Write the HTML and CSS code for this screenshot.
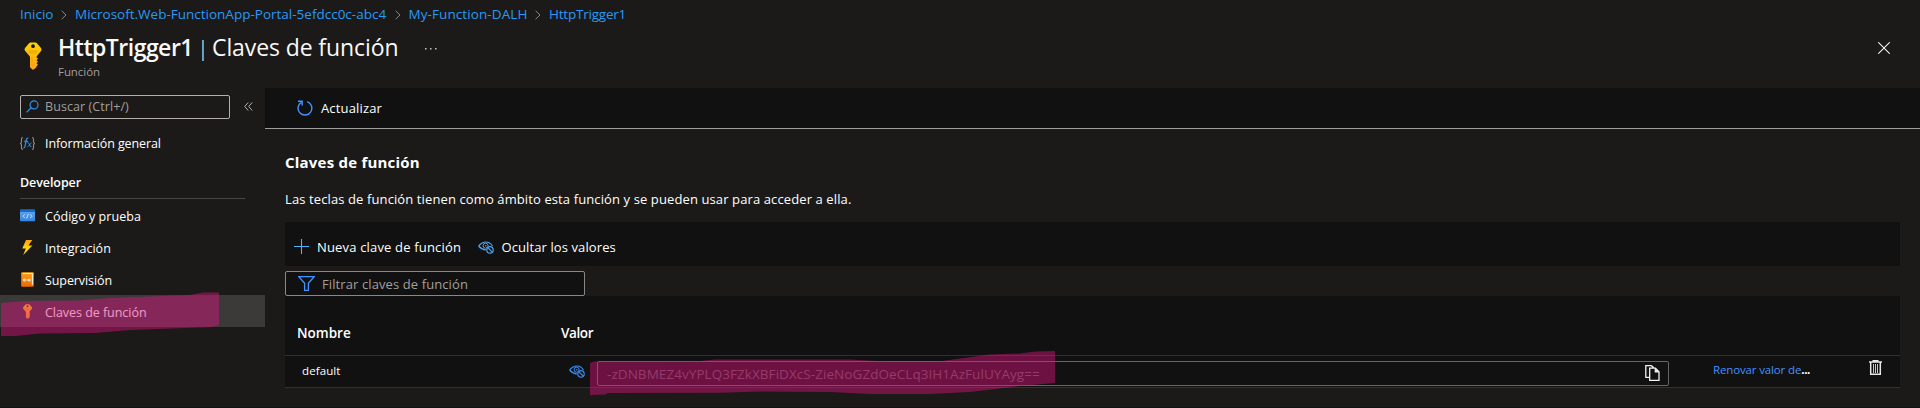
FILE: index.html
```html
<!DOCTYPE html>
<html lang="es">
<head>
<meta charset="utf-8">
<title>HttpTrigger1 | Claves de función</title>
<link rel="stylesheet" href="styles.css">
</head>
<body>
<svg width="0" height="0" class="defs" aria-hidden="true">
  <defs>
    <linearGradient id="gold" x1="0" y1="0" x2="0" y2="1"><stop offset="0" stop-color="#ffd400"/><stop offset="1" stop-color="#fea11b"/></linearGradient>
    <linearGradient id="bolt" x1="0" y1="0" x2="0" y2="1"><stop offset="0" stop-color="#fea11b"/><stop offset=".5" stop-color="#ffd400"/><stop offset="1" stop-color="#ffe452"/></linearGradient>
    <linearGradient id="orange" x1="0" y1="0" x2="0" y2="1"><stop offset="0" stop-color="#ffa01a"/><stop offset="1" stop-color="#ea6a00"/></linearGradient>
    <linearGradient id="blue" x1="0" y1="0" x2="0" y2="1"><stop offset="0" stop-color="#5ea0ef"/><stop offset="1" stop-color="#3285e0"/></linearGradient>
    <symbol id="key" viewBox="0 0 18 28">
      <path fill="url(#gold)" fill-rule="evenodd" d="M6.6.6h4.8q.8 0 1.300.5l4.300 5q.900 1.100.200 2.600l-4 5.100q-.7.700-.7 1.500l1.500 1.500-1.500 1.500 1.500 1.500-1.500 1.500 1.500 1.500-1.500 1.500v.9L9.600 27.400q-.6.600-1.200 0L6 25.200V15.300q0-.8-.7-1.500L1 8.700Q0 7.300 1 6.100l4.300-5q.5-.5 1.300-.5ZM9 2.300a1.900 1.900 0 1 0 0 3.800 1.900 1.900 0 0 0 0-3.800Z"/>
      <path fill="#f0a010" d="M4.500 8.600h9v1.100h-9zM4.500 10.400h9v1.100h-9zM7.500 15.500h1v9.500l-1-1z"/>
    </symbol>
    <symbol id="eye" viewBox="0 0 16 13">
      <path fill="none" stroke="currentColor" stroke-width="1.200" d="M.6 5Q4 1 8 1t6.500 4M.6 5Q3.500 8.500 7.800 8.800"/>
      <circle cx="7.600" cy="4.700" r="2.500" fill="none" stroke="currentColor"/>
      <circle cx="7.800" cy="4.700" r=".8" fill="currentColor"/>
      <circle cx="12" cy="8.900" r="3.200" fill="#111" stroke="currentColor" stroke-width="1.200"/>
      <path stroke="currentColor" stroke-width="1.200" d="m9.800 6.700 4.400 4.400"/>
    </symbol>
    <symbol id="sep" viewBox="0 0 6 10"><path fill="none" stroke="#8a8886" d="m.6.800 4.400 4.200L.6 9.200"/></symbol>
  </defs>
</svg>

<div class="page">
  <nav class="crumbs">
    <a class="c1">Inicio</a><svg class="sep"><use href="#sep"/></svg>
    <a class="c2">Microsoft.Web-FunctionApp-Portal-5efdcc0c-abc4</a><svg class="sep"><use href="#sep"/></svg>
    <a class="c3">My-Function-DALH</a><svg class="sep"><use href="#sep"/></svg>
    <a class="c4">HttpTrigger1</a>
  </nav>

  <header class="head">
    <svg class="head-key"><use href="#key"/></svg>
    <div class="head-text">
      <h1><b>HttpTrigger1</b><i>|</i><span>Claves de función</span><svg class="more" viewBox="0 0 12 2"><path fill="#c8c6c4" d="M0 0h1.500v1.500H0zM5 0h1.500v1.500H5zM10 0h1.500v1.500H10z"/></svg></h1>
      <p>Función</p>
    </div>
    <svg class="close" viewBox="0 0 12 12"><path stroke="#f3f2f1" stroke-width="1.100" d="m.3.300 11.400 11.400M11.700.3.300 11.700"/></svg>
  </header>

  <div class="body">
    <aside class="side">
      <div class="search-row">
        <div class="search">
          <svg class="i12" viewBox="0 0 13 13"><circle cx="8" cy="4.900" r="4" fill="none" stroke="#2f8ee0" stroke-width="1.200"/><path stroke="#2f8ee0" stroke-width="1.300" d="M5.200 7.700.5 12.400"/></svg>
          <span>Buscar (Ctrl+/)</span>
        </div>
        <svg class="collapse" viewBox="0 0 9 9"><path fill="none" stroke="#b3b0ad" d="M4.200.5.700 4.500l3.500 4M8.200.5 4.700 4.500l3.500 4"/></svg>
      </div>
      <div class="item overview">
        <svg class="i15" viewBox="0 0 15 15"><path fill="none" stroke="#8a8886" stroke-width="1.200" d="M3 1.500q-1.500 0-1.500 1.500v2.500q0 1.500-1 2 1 .5 1 2V12q0 1.500 1.500 1.500M12 1.500q1.500 0 1.500 1.500v2.500q0 1.500 1 2-1 .5-1 2V12q0 1.500-1.500 1.500"/><path fill="none" stroke="#2f8ee0" stroke-width="1.300" d="M8.300 2.200Q6.600 1.800 6.200 4L5 10.500q-.3 1.500-1.500 1.200M4.300 5.500H8"/><path fill="none" stroke="#2f8ee0" d="M7.700 6.800q1.200-.3 1.500 1l.8 2.200q.4 1 1.500.6M11.700 6.800 7.500 10.900"/></svg>
        <span class="t1">Información general</span>
      </div>
      <h2>Developer</h2>
      <div class="item">
        <svg class="i15" viewBox="0 0 15 15"><path fill="url(#blue)" d="M0 3.500h15v9q0 .7-.7.700H.7q-.7 0-.7-.7z"/><path fill="#0f6cc9" d="M.7 1.200h13.600q.7 0 .7.700v2H0v-2q0-.7.700-.7z"/><path fill="none" stroke="#d8eaff" stroke-width=".9" d="M4.800 6.300 3 8.200l1.800 1.900M10.200 6.300 12 8.200l-1.800 1.900M8.400 5.800l-1.800 4.700"/></svg>
        <span class="t2">Código y prueba</span>
      </div>
      <div class="item">
        <svg class="i15" viewBox="0 0 15 15"><path fill="url(#bolt)" d="M6 0h6.300L8.400 5.500h4L3.200 15l2.700-6.500H2.300z"/></svg>
        <span class="t3">Integración</span>
      </div>
      <div class="item">
        <svg class="i15" viewBox="0 0 15 15"><rect x="1.200" y=".2" width="12.600" height="14.600" rx="1" fill="url(#orange)"/><path fill="#fff" d="M3 1.200h9.800v11.600h-.9V2.100H3z"/><circle cx="4.300" cy="8" r="1" fill="none" stroke="#fff"/><circle cx="9.300" cy="8" r="1" fill="none" stroke="#fff"/><path stroke="#fff" stroke-width=".7" d="M5.500 8h2.600"/></svg>
        <span class="t4">Supervisión</span>
      </div>
      <div class="item active">
        <svg class="i15"><use href="#key"/></svg>
        <span class="t5">Claves de función</span>
      </div>
    </aside>

    <main class="main">
      <div class="toolbar">
        <svg class="refresh" viewBox="0 0 16 16"><path fill="none" stroke="#4292ff" stroke-width="1.400" d="M10.200 1.600A6.900 6.900 0 1 1 4.200 2.300M.9 1.300h4.300v4.300"/></svg>
        <span>Actualizar</span>
      </div>
      <section class="content">
        <h3>Claves de función</h3>
        <p class="intro">Las teclas de función tienen como ámbito esta función y se pueden usar para acceder a ella.</p>
        <div class="commands">
          <svg class="plus" viewBox="0 0 15 15"><path stroke="#56b0f5" stroke-width="1.100" d="M7.500 0v15M0 7.500h15"/></svg>
          <span class="new">Nueva clave de función</span>
          <svg class="eye light"><use href="#eye"/></svg>
          <span class="hide">Ocultar los valores</span>
        </div>
        <div class="filter">
          <svg class="funnel" viewBox="0 0 17 15"><path fill="none" stroke="#4292ff" stroke-width="1.300" d="M.9.700h15.200l-5.700 6.600v7H6.600v-7z"/></svg>
          <span>Filtrar claves de función</span>
        </div>
        <div class="table">
          <div class="row thead"><b class="name">Nombre</b><b class="valor">Valor</b></div>
          <div class="row">
            <span class="default">default</span>
            <svg class="eye"><use href="#eye"/></svg>
            <div class="field">
              <span>-zDNBMEZ4vYPLQ3FZkXBFiDXcS-ZieNoGZdOeCLq3IH1AzFulUYAyg==</span>
              <svg class="copy" viewBox="0 0 15 16"><path fill="none" stroke="#f3f2f1" stroke-width="1.300" d="M4 12.300H.8V.7h5.500l2.500 2.100M4.700 3.200h5.700l3.600 3.600v8.500H4.700z"/><path fill="#f3f2f1" d="M9.700 3v4.500h4.500z"/></svg>
            </div>
            <a class="renew">Renovar valor de<b>...</b></a>
            <svg class="trash" viewBox="0 0 13 15"><path fill="none" stroke="#e6e6e6" stroke-width="1.500" d="M0 2.100h13M4.200 2V.8h4.600V2M1.700 2.500v11.700h9.600V2.500"/><path stroke="#c8c8c8" d="M4.500 4v9M6.500 4v9M8.500 4v9"/></svg>
          </div>
        </div>
      </section>
    </main>
  </div>

  <svg class="marker" viewBox="0 0 1920 408">
    <path d="M1 303 25 301 80 300.500 110 298 190 295 203 292.500H218L219 293V325L212 327 130 330 95 333 40 333.500 15 336H1Z"/>
    <path d="M590 363 594 361.500 700 361 715 359.500H850L895 362H935L960 358.500 990 354.500 1020 353.500 1035 351.500 1055 351V383L1020 386 970 392 930 394H870L830 392 760 391.500 720 392.700 608 393 605 394.500 590 395Z"/>
  </svg>
</div>
</body>
</html>
```
FILE: styles.css
```css
* { box-sizing: border-box; margin: 0; padding: 0; }
body { background: #1b1a19; color: #fff; font: 12.5px/32px "Open Sans", "Noto Sans", sans-serif; overflow: hidden; }
svg { display: block; flex: none; }
.defs { position: absolute; }
.page { position: relative; width: 1920px; height: 408px; display: flex; flex-direction: column; border-bottom: 1px solid #111; white-space: nowrap; }

.crumbs { height: 28px; padding-left: 20px; display: flex; align-items: center; font-size: 13.5px; line-height: 28px; color: #2899f5; }
.sep { width: 6px; height: 10px; margin: 1px 8px 0 7.5px; }
.c1 { width: 33.5px; }
.c2 { width: 312px; }
.c3 { width: 119px; letter-spacing: .09px; }
.c4 { letter-spacing: -.22px; }

.head { height: 60px; padding-left: 24px; display: flex; }
.head-key { width: 18px; height: 28px; margin-top: 14px; }
.head-text { margin-left: 16px; flex: 1; }
.head h1 { display: flex; align-items: center; padding-top: 3px; height: 35px; font-size: 23px; line-height: 32px; font-weight: 400; color: #faf9f8; }
.head h1 b { font-weight: 600; letter-spacing: -.5px; width: 142px; }
.head h1 i { font-style: normal; font-weight: 300; font-size: 22px; width: 12px; margin-left: -3px; }
.head h1 span { letter-spacing: -.1px; width: 215px; margin-left: 3px; }
.more { width: 12px; height: 2px; margin-left: -2px; margin-top: 4px; }
.head p { font-size: 11.500px; line-height: 16px; padding-top: 1px; height: 17px; color: #a19f9d; letter-spacing: -.06px; }
.close { width: 12px; height: 12px; margin: 14px 30px 0 0; }

.body { flex: 1; display: flex; }
.side { width: 265px; }
.search-row { display: flex; align-items: center; height: 38px; padding: 0 0 1px 20px; }
.search { width: 210px; height: 24px; border: 1px solid #b3b0ad; border-radius: 2px; display: flex; align-items: center; padding-left: 5px; line-height: 22px; color: #a19f9d; letter-spacing: .08px; }
.search span { padding-top: 1px; }
.i12 { width: 13px; height: 13px; margin-right: 6px; }
.collapse { width: 9px; height: 9px; margin-left: 14px; }
.item { display: flex; align-items: center; height: 32px; padding-left: 20px; }
.item span { padding-top: 3px; }
.i15 { width: 15px; height: 15px; margin-right: 10px; }
.overview { height: 34px; }
.overview span { padding-top: 1px; }
.t1 { letter-spacing: -.1px; }
.t2 { letter-spacing: .04px; }
.t4 { letter-spacing: -.09px; }
.t5 { letter-spacing: -.04px; }
.side h2 { margin: 6px 20px 0; height: 33px; line-height: 33px; border-bottom: 1px solid #484644; font-size: 12.500px; font-weight: 600; letter-spacing: -.08px; }
.active { background: #3b3a39; }

.main { flex: 1; }
.toolbar { height: 41px; background: #111; border-bottom: 1px solid #a19f9d; display: flex; align-items: center; padding-left: 32px; font-size: 13px; letter-spacing: .15px; }
.refresh { width: 16px; height: 16px; margin-right: 8px; }
.content { padding: 20px 20px 0; }
h3 { height: 26px; line-height: 26px; font-size: 15px; letter-spacing: .22px; }
.intro { height: 47px; padding-top: 8px; font-size: 13px; line-height: 32px; letter-spacing: .11px; }
.commands { height: 44px; background: #111; display: flex; align-items: center; padding: 5px 0 0 9px; font-size: 13px; }
.plus { width: 15px; height: 15px; margin-right: 8px; }
.new { width: 162px; letter-spacing: .17px; }
.hide { letter-spacing: .1px; }
.eye { width: 16px; height: 13px; color: #3b8cf0; }
.light { color: #4ba6ee; margin: 2px 7.500px 0 -1px; }
.filter { width: 300px; height: 25px; margin-top: 5px; border: 1px solid #8a8886; border-radius: 2px; background: #111; display: flex; align-items: center; padding-left: 12px; font-size: 13px; letter-spacing: .1px; color: #a19f9d; }
.funnel { width: 17px; height: 15px; margin-right: 7px; }
.table { background: #111; }
.row { height: 32px; display: flex; align-items: center; border-bottom: 1px solid #323130; }
.thead { height: 60px; padding: 15px 0 0 12px; border-color: #2b3138; font-size: 13.500px; }
.thead b { font-weight: 600; }
.name { width: 264px; }
.valor { letter-spacing: -.4px; }
.default { width: 284px; padding: 0 0 1px 17px; font-size: 11.500px; line-height: 24px; letter-spacing: .1px; }
.field { width: 1072px; height: 25px; margin: 4px 0 0 12px; border: 1px solid #666; border-radius: 2px; display: flex; align-items: center; justify-content: space-between; padding: 0 8px 0 9px; font-size: 13.500px; line-height: 22px; color: #5c5a58; letter-spacing: .06px; }
.copy { width: 15px; height: 16px; margin-bottom: 2px; }
.renew { width: 156px; margin-left: 44px; padding-bottom: 3px; line-height: 24px; font-size: 11.500px; letter-spacing: -.14px; color: #4292ff; }
.renew b { color: #fff; letter-spacing: -.4px; }
.trash { width: 13px; height: 15px; margin-bottom: 8px; }

.marker { position: absolute; left: 0; top: 0; width: 1920px; height: 408px; fill: rgba(227, 19, 130, .44); pointer-events: none; }
```
